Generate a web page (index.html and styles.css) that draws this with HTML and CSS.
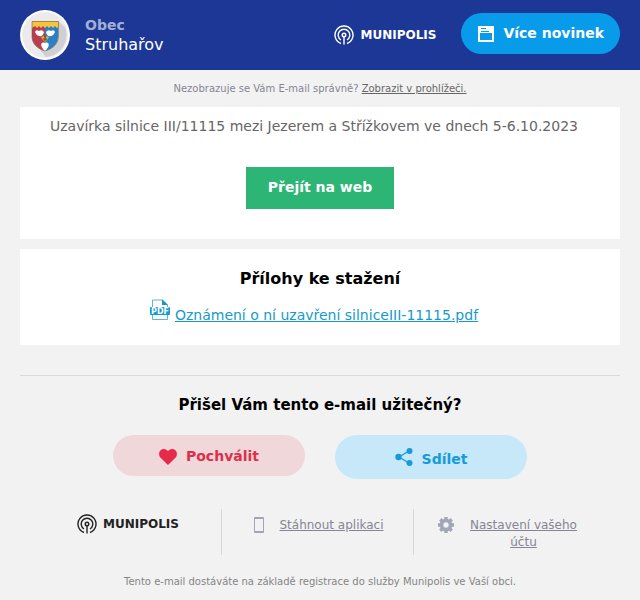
FILE: index.html
```html
<!DOCTYPE html>
<html lang="cs">
<head>
    <meta charset="UTF-8">
    <meta name="viewport" content="width=device-width, initial-scale=1.0">
    <title>Obec Struhařov - Munipolis</title>
    <link rel="stylesheet" href="styles.css">
</head>
<body>

<header class="header">
    <div class="town">
        <svg class="town-crest" viewBox="0 0 50 50" aria-hidden="true">
            <circle cx="25" cy="25" r="25" fill="#fff"/>
            <circle cx="25" cy="25" r="23" fill="#ebebeb"/>
            <path d="M39 12 L45 17 A22 22 0 0 1 26 47 L20 40 Z" fill="#d0d0d4"/>
            <path d="M12 12 H25 V41 C16 38 12 33 12 26 Z" fill="#b93f4e"/>
            <path d="M38 12 H25 V41 C34 38 38 33 38 26 Z" fill="#2b7fc4"/>
            <path d="M12 11 H39 V17 L37 18 L35 16 L33 18 L31 16 L29 18 L27 16 L25 18 L23 16 L21 18 L19 16 L17 18 L15 16 L12 18 Z" fill="#f5c53c"/>
            <path d="M12 26 V11.500 H38.500 V26 C38 34 34 38 25 41 C16 38 12 33 12 26 Z" fill="none" stroke="#6d5a4a" stroke-width=".6"/>
            <path d="M15 22 Q16 19 19 21 Q22 19 24 22 Q23 27 19 26 Q16 25 15 22 Z M35 22 Q34 19 31 21 Q28 19 26 22 Q27 27 31 26 Q34 25 35 22 Z" fill="#fff"/>
            <path d="M25 41 C19 36 21 31 25 33 C29 31 31 36 25 41 Z" fill="#fff"/>
            <path d="M21 27 L24 26 L25 28 L27 26 L29 27 L27 30 L25 32 L23 30 Z" fill="#e2b230"/>
            <path d="M23 29 H27 M25 26 V31" stroke="#544b35"/>
        </svg>
        <div class="town-name">
            <strong>Obec</strong>
            <span>Struhařov</span>
        </div>
    </div>
    <div class="header-right">
        <div class="logo logo-light">
            <svg class="logo-mark" viewBox="0 0 20 20" aria-hidden="true">
                <circle cx="10" cy="10" r="1.800"/>
                <path d="M10 12 V19.500 M7 18.500 A9 9 0 1 1 13 18.500 M7 15 A5.800 5.800 0 1 1 13 15"/>
            </svg>
            <span>MUNIPOLIS</span>
        </div>
        <a class="news-btn" href="#">
            <svg class="news-icon" viewBox="0 0 16 16" aria-hidden="true">
                <path fill="#fff" fill-rule="evenodd" d="M0 0 H16 V16 H0 Z M2 7 V14 H14 V7 Z"/>
                <path d="M3 2.500 H8 M3 5.500 H11" stroke="#079be9"/>
            </svg>
            Více novinek
        </a>
    </div>
</header>

<main class="content">
    <p class="browser-note">Nezobrazuje se Vám E-mail správně? <a href="#">Zobrazit v prohlížeči.</a></p>

    <section class="card message">
        <p>Uzavírka silnice III/11115 mezi Jezerem a Střížkovem ve dnech 5-6.10.2023</p>
        <a class="web-btn" href="#">Přejít na web</a>
    </section>

    <section class="card files">
        <h2>Přílohy ke stažení</h2>
        <div class="file">
            <svg class="pdf-icon" viewBox="0 0 20 22" aria-hidden="true">
                <path d="M2.500 9 V1 H12 L17.500 6 V9 M2.500 15 V20.500 H17.500 V15" fill="none" stroke="#5fb2d8"/>
                <path d="M12 0 L18 6 H12 Z" fill="#2291c6"/>
                <rect y="8" width="20" height="8" rx="1" fill="#159bd7"/>
                <text class="pdf-label" x="10" y="15" text-anchor="middle">PDF</text>
            </svg>
            <a href="#">Oznámení o ní uzavření silniceIII-11115.pdf</a>
        </div>
    </section>

    <section class="feedback">
        <h2>Přišel Vám tento e-mail užitečný?</h2>
        <div class="feedback-buttons">
            <a class="pill praise" href="#">
                <svg class="heart-icon" viewBox="0 0 18 16" aria-hidden="true">
                    <path fill="#e62b4a" d="M9 16 L1.600 8.700 C-.6 6.300 -.3 2.700 1.900 1 C4.200 -.8 7.400 -.1 9 2.300 C10.600 -.1 13.800 -.8 16.100 1 C18.300 2.700 18.600 6.300 16.400 8.700 Z"/>
                </svg>
                Pochválit
            </a>
            <a class="pill share" href="#">
                <svg class="share-icon" viewBox="0 0 18 18" aria-hidden="true">
                    <path d="M14 3 L4 9 L14 15" fill="none" stroke="#159bdc" stroke-width="1.300"/>
                    <g fill="#159bdc"><circle cx="14.500" cy="3" r="3"/><circle cx="3.500" cy="9" r="3.200"/><circle cx="14.500" cy="15" r="3"/></g>
                </svg>
                <span>Sdílet</span>
            </a>
        </div>
    </section>

    <footer>
        <div class="footer-links">
            <div class="footer-cell">
                <div class="logo logo-dark">
                    <svg class="logo-mark" viewBox="0 0 20 20" aria-hidden="true">
                        <circle cx="10" cy="10" r="1.800"/>
                        <path d="M10 12 V19.500 M7 18.500 A9 9 0 1 1 13 18.500 M7 15 A5.800 5.800 0 1 1 13 15"/>
                    </svg>
                    <span>MUNIPOLIS</span>
                </div>
            </div>
            <div class="footer-cell">
                <svg class="footer-icon" viewBox="0 0 16 16" aria-hidden="true">
                    <path fill="#a1a5b5" fill-rule="evenodd" d="M4 0 H12 Q13 0 13 1 V15 Q13 16 12 16 H4 Q3 16 3 15 V1 Q3 0 4 0 Z M4 2 V14 H12 V2 Z"/>
                </svg>
                <a href="#">Stáhnout aplikaci</a>
            </div>
            <div class="footer-cell">
                <svg class="footer-icon" viewBox="0 0 16 16" aria-hidden="true">
                    <circle cx="8" cy="8" r="4.500" fill="none" stroke="#a1a5b5" stroke-width="3.600"/>
                    <path d="M8 0 V3 M8 13 V16 M0 8 H3 M13 8 H16 M2.300 2.300 L4.500 4.500 M11.500 11.500 L13.700 13.700 M13.700 2.300 L11.500 4.500 M4.500 11.500 L2.300 13.700" stroke="#a1a5b5" stroke-width="3.400"/>
                </svg>
                <a href="#">Nastavení vašeho účtu</a>
            </div>
        </div>
        <div class="legal">
            <p>Tento e-mail dostáváte na základě registrace do služby Munipolis ve Vaší obci.</p>
            <p>Můžete upravit své nastavení nebo se z odběru kdykoliv odhlásit.</p>
        </div>
    </footer>
</main>

</body>
</html>
```
FILE: styles.css
```css
* { box-sizing: border-box; }
body { margin: 0; background: #f2f2f2; color: #000; font-family: "DejaVu Sans", Verdana, sans-serif; font-size: 14px; }
p, h2 { margin: 0; }

.header { background: #1c3795; min-height: 70px; padding: 10px 20px; display: flex; justify-content: space-between; align-items: center; }
.town { display: flex; align-items: center; gap: 15px; }
.town-crest { width: 50px; height: 50px; }
.town-name { display: flex; flex-direction: column; color: #fff; font-size: 16px; line-height: 20px; }
.town-name strong { color: #a4afd5; font-size: 14px; }
.header-right { display: flex; align-items: center; gap: 25px; }
.logo { display: flex; align-items: center; gap: 6px; font-size: 12px; font-weight: bold; line-height: 20px; }
.logo-mark { width: 20px; height: 20px; fill: none; stroke: currentColor; stroke-width: 1.4; }
.logo-light { color: #fff; }
.logo-dark { color: #222; }
.news-btn { display: flex; align-items: center; gap: 9px; margin-bottom: 3px; padding: 10px 16px 10px 17px; border-radius: 21px; background: #079be9; color: #fff; font-weight: bold; line-height: 21px; text-decoration: none; }
.news-icon { width: 16px; height: 16px; }

.content { padding: 0 20px; }
.browser-note { padding: 12px 0; color: #858593; font-size: 10px; line-height: 13px; text-align: center; }
.browser-note a { color: #666; }

.card { background: #fff; margin-bottom: 10px; }
.message { padding: 9px 30px 30px; color: #666; line-height: 20px; }
.web-btn { display: block; width: fit-content; margin: 31px auto 0; padding: 10px 22px 12px; background: #2cb574; color: #fff; font-weight: bold; text-decoration: none; }
.files { padding: 20px 30px; text-align: center; }
.files h2 { font-size: 16px; line-height: 20px; }
.file { display: flex; justify-content: center; align-items: flex-start; gap: 5px; padding: 10px 12px 0 0; }
.file a { color: #159bc9; line-height: 16px; margin: 8px 0 2px; }
.pdf-icon { width: 20px; height: 22px; }
.pdf-label { font-size: 8px; font-weight: bold; fill: #fff; }

.feedback { margin-top: 30px; padding-top: 19px; border-top: 1px solid #dadada; text-align: center; }
.feedback h2 { font-size: 15px; line-height: 20px; }
.feedback-buttons { display: flex; justify-content: center; align-items: flex-start; gap: 30px; margin-top: 20px; }
.pill { display: flex; justify-content: center; align-items: center; gap: 9px; width: 32%; border-radius: 22px; padding: 11px 10px 9px; font-weight: bold; line-height: 21px; text-decoration: none; }
.praise { background: #f0d7da; color: #dc3049; }
.share { align-items: flex-start; background: #c6e8f8; color: #159bdc; }
.share span { padding-top: 3px; }
.heart-icon { width: 18px; height: 16px; }
.share-icon { width: 18px; height: 18px; margin-top: 2px; }

.footer-links { display: flex; justify-content: center; margin-top: 30px; padding-right: 6px; }
.footer-cell { flex: 0 1 192px; min-height: 46px; display: flex; justify-content: center; align-items: flex-start; gap: 12px; padding: 8px 24px 3px; font-size: 12px; line-height: 17px; text-align: center; }
.footer-cell:first-child { padding: 8px 20px 3px 26px; }
.footer-cell + .footer-cell { border-left: 1px solid #d9d9dc; }
.footer-cell .logo { margin-top: -3px; }
.footer-cell a { color: #858593; }
.footer-icon { flex: none; width: 16px; height: 16px; }
.legal { padding-top: 15px; color: #858585; font-size: 10px; line-height: 24px; text-align: center; }
```
